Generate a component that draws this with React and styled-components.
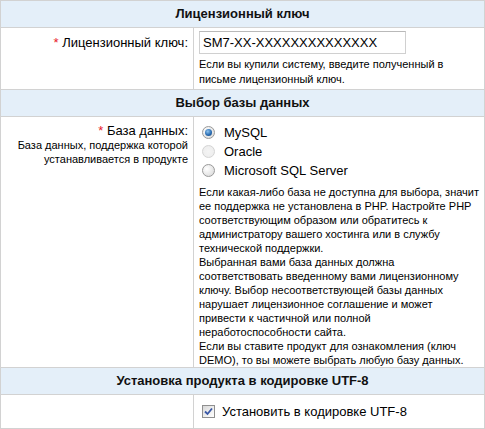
import React from "react";
import styled, { createGlobalStyle } from "styled-components";

const Global = createGlobalStyle`
  html, body { margin: 0; padding: 0; background: #fff; }
  body { font-family: "Liberation Sans", Arial, sans-serif; color: #000; }
  * { box-sizing: border-box; }
`;

const Panel = styled.div`
  width: 485px;
  height: 429px;
  border: 1px solid #d2d2d2;
  display: flex;
  flex-direction: column;
  overflow: hidden;
`;

const Header = styled.div`
  height: 27px;
  line-height: 26px;
  background: #e4eff9;
  border-bottom: 1px solid #d2d2d2;
  text-align: center;
  font-weight: bold;
  font-size: 13px;
  color: #111;
`;

const Row = styled.div`
  display: grid;
  grid-template-columns: 193px 1fr;
  border-bottom: ${(p) => (p.$last ? "none" : "1px solid #d2d2d2")};
  flex: ${(p) => (p.$last ? "1" : "none")};
`;

const LabelCell = styled.div`
  border-right: 1px solid #d2d2d2;
  text-align: right;
  padding: ${(p) => p.$pt || 6}px 5px 0 0;
`;

const FieldCell = styled.div`
  padding: ${(p) => p.$pt || 0}px 3px ${(p) => p.$pb || 0}px 5px;
  display: flex;
  flex-direction: column;
  justify-content: ${(p) => (p.$center ? "center" : "flex-start")};
`;

const Label = styled.div`
  font-size: 13px;
  line-height: 15px;
  white-space: nowrap;
`;

const Star = styled.span`
  color: #e8202a;
`;

const SubLabel = styled.div`
  font-size: 11px;
  line-height: 14px;
  white-space: nowrap;
`;

const TextInput = styled.input`
  width: 207px;
  height: 23px;
  border: 1px solid #d0d0d0;
  border-top-color: #b9b9b9;
  padding: 0 3px;
  font-family: "Liberation Sans", Arial, sans-serif;
  font-size: 13px;
  color: #000;
  outline: none;
`;

const Help = styled.div`
  font-size: 11px;
  line-height: ${(p) => p.$lh || 14}px;
  margin-top: ${(p) => p.$mt || 0}px;
  white-space: nowrap;
  color: #000;
`;

const OptionRow = styled.label`
  display: flex;
  align-items: center;
  height: 19px;
  font-size: 13px;
  gap: 9px;
  padding-left: 3px;
  color: #000;
`;

const RadioMark = styled.span`
  width: 13px;
  height: 13px;
  border-radius: 50%;
  border: 1px solid ${(p) => (p.$disabled ? "#d4d4d4" : "#9a9a9a")};
  background: ${(p) =>
    p.$disabled
      ? "radial-gradient(circle at 50% 50%, #f4f4f4 0, #ececec 100%)"
      : "radial-gradient(circle at 35% 35%, #ffffff 0, #e6e6e6 60%, #d4d4d4 100%)"};
  display: flex;
  align-items: center;
  justify-content: center;
  flex: none;
  &::after {
    content: "";
    display: ${(p) => (p.$checked ? "block" : "none")};
    width: 7px;
    height: 7px;
    border-radius: 50%;
    background: radial-gradient(circle at 40% 35%, #8fc4ee 0, #2a6db3 55%, #163f73 100%);
  }
`;

const CheckRow = styled.label`
  display: flex;
  align-items: center;
  gap: 7px;
  padding-left: 3px;
  font-size: 13px;
  color: #000;
`;

const CheckMark = styled.span`
  width: 13px;
  height: 13px;
  border: 1px solid #8f8f8f;
  background: linear-gradient(135deg, #d8d8d8 0%, #f4f4f4 70%, #ffffff 100%);
  display: flex;
  align-items: center;
  justify-content: center;
  flex: none;
`;

const Radio = ({ checked, disabled, children }) => (
  <OptionRow>
    <RadioMark $checked={checked} $disabled={disabled} />
    {children}
  </OptionRow>
);

export default function App() {
  return (
    <>
      <Global />
      <Panel>
        <Header>Лицензионный ключ</Header>
        <Row>
          <LabelCell $pt={7}>
            <Label>
              <Star>*</Star> Лицензионный ключ:
            </Label>
          </LabelCell>
          <FieldCell $pt={3} $pb={2}>
            <TextInput defaultValue="SM7-XX-XXXXXXXXXXXXXX" />
            <Help $lh={15} $mt={3}>
              Если вы купили систему, введите полученный в
              <br />
              письме лицензионный ключ.
            </Help>
          </FieldCell>
        </Row>
        <Header>Выбор базы данных</Header>
        <Row>
          <LabelCell $pt={6}>
            <Label>
              <Star>*</Star> База данных:
            </Label>
            <SubLabel>
              База данных, поддержка которой
              <br />
              устанавливается в продукте
            </SubLabel>
          </LabelCell>
          <FieldCell $pt={6} $pb={0}>
            <Radio checked>MySQL</Radio>
            <Radio disabled>Oracle</Radio>
            <Radio>Microsoft SQL Server</Radio>
            <Help $mt={5}>
              Если какая-либо база не доступна для выбора, значит
              <br />
              ее поддержка не установлена в PHP. Настройте PHP
              <br />
              соответствующим образом или обратитесь к
              <br />
              администратору вашего хостинга или в службу
              <br />
              технической поддержки.
              <br />
              Выбранная вами база данных должна
              <br />
              соответствовать введенному вами лицензионному
              <br />
              ключу. Выбор несоответствующей базы данных
              <br />
              нарушает лицензионное соглашение и может
              <br />
              привести к частичной или полной
              <br />
              неработоспособности сайта.
              <br />
              Если вы ставите продукт для ознакомления (ключ
              <br />
              DEMO), то вы можете выбрать любую базу данных.
            </Help>
          </FieldCell>
        </Row>
        <Header>Установка продукта в кодировке UTF-8</Header>
        <Row $last>
          <LabelCell />
          <FieldCell $center>
            <CheckRow>
              <CheckMark>
                <svg width="9" height="9" viewBox="0 0 9 9">
                  <path d="M1 4.5 L3.5 7 L8 1.5" fill="none" stroke="#3957a6" strokeWidth="1.8" />
                </svg>
              </CheckMark>
              Установить в кодировке UTF-8
            </CheckRow>
          </FieldCell>
        </Row>
      </Panel>
    </>
  );
}
